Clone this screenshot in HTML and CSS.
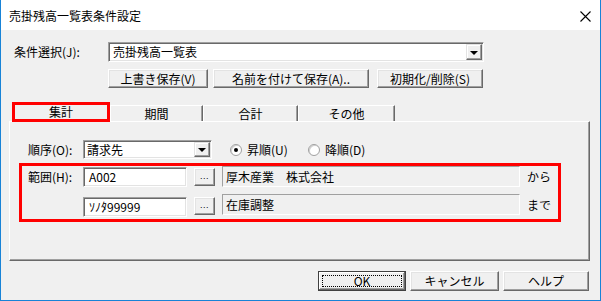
FILE: index.html
```html
<!DOCTYPE html>
<html lang="ja">
<head>
<meta charset="utf-8">
<title>売掛残高一覧表条件設定</title>
<link rel="stylesheet" href="styles.css">
</head>
<body>
<div class="window">
  <div class="titlebar">
    <span class="title">売掛残高一覧表条件設定</span>
    <svg class="close" width="11" height="11" viewBox="0 0 11 11"><path d="M0.5 0.5L10.5 10.5M10.5 0.5L0.5 10.5" stroke="#000" stroke-width="1.1" fill="none"/></svg>
  </div>
  <div class="client">
    <div class="cond-row">
      <span class="cond-label">条件選択(J):</span>
      <div class="combo cond-combo">
        <span class="combo-text">売掛残高一覧表</span>
        <span class="dd-btn"><span class="arrow"></span></span>
      </div>
    </div>
    <div class="action-row">
      <button class="btn btn-save">上書き保存(V)</button>
      <button class="btn btn-saveas">名前を付けて保存(A)..</button>
      <button class="btn btn-reset">初期化/削除(S)</button>
    </div>
    <div class="tabs">
      <div class="tab tab-active">集計</div>
      <div class="tab tab-2">期間</div>
      <div class="tab tab-3">合計</div>
      <div class="tab tab-4">その他</div>
    </div>
    <div class="panel">
      <div class="order-row">
        <span class="field-label">順序(O):</span>
        <div class="combo order-combo">
          <span class="combo-text order-text">請求先</span>
          <span class="dd-btn"><span class="arrow"></span></span>
        </div>
        <span class="radio radio-asc"><span class="radio-dot checked"></span>昇順(U)</span>
        <span class="radio radio-desc"><span class="radio-dot"></span>降順(D)</span>
      </div>
      <div class="range">
        <div class="range-row range-from">
          <span class="field-label">範囲(H):</span>
          <div class="edit">A002</div>
          <div class="btn btn-browse"><span class="dots">...</span></div>
          <div class="name-field">厚木産業　株式会社</div>
          <span class="range-suffix">から</span>
        </div>
        <div class="range-row range-to">
          <span class="field-label"></span>
          <div class="edit">ｿﾉﾀ99999</div>
          <div class="btn btn-browse"><span class="dots">...</span></div>
          <div class="name-field">在庫調整</div>
          <span class="range-suffix">まで</span>
        </div>
      </div>
    </div>
    <div class="footer">
      <button class="btn btn-ok"><span class="focus">OK</span></button>
      <button class="btn btn-cancel">キャンセル</button>
      <button class="btn btn-help">ヘルプ</button>
    </div>
  </div>
</div>
</body>
</html>
```

FILE: styles.css
```css
* { box-sizing: border-box; }

body {
  margin: 0;
  width: 601px;
  height: 301px;
  overflow: hidden;
  background: #ffffff;
  font-family: "Noto Sans CJK JP", "Noto Sans", sans-serif;
  font-size: 12px;
  line-height: 1;
  color: #000;
}

.window {
  width: 601px;
  height: 301px;
  border: 1px solid #1883d7;
  border-top: none;
  display: flex;
  flex-direction: column;
}

.titlebar {
  height: 30px;
  flex: none;
  background: #ffffff;
  display: flex;
  align-items: center;
  justify-content: space-between;
  padding: 2px 9px 0 8px;
}

.title { font-size: 12px; }

.close { display: block; }

.client {
  flex: 1;
  background: #f0f0f0;
  padding-top: 12px;
}

/* generic controls */
.btn {
  font-family: inherit;
  font-size: 12px;
  line-height: 1;
  color: #000;
  background: #f0f0f0;
  border: 1px solid;
  border-color: #ffffff #696969 #696969 #ffffff;
  box-shadow: inset -1px -1px 0 #a0a0a0, inset 1px 1px 0 #e3e3e3;
  padding: 0;
  margin: 0;
  display: flex;
  align-items: center;
  justify-content: center;
}

.combo {
  height: 20px;
  background: #ffffff;
  border: 1px solid;
  border-color: #a0a0a0 #ffffff #ffffff #a0a0a0;
  box-shadow: inset 1px 1px 0 #696969, inset -1px -1px 0 #e3e3e3;
  display: flex;
  align-items: stretch;
  padding: 1px;
}

.combo-text {
  flex: 1;
  display: flex;
  align-items: center;
  padding-left: 3px;
}

.dd-btn {
  width: 16px;
  flex: none;
  background: #f0f0f0;
  border: 1px solid;
  border-color: #e3e3e3 #696969 #696969 #e3e3e3;
  box-shadow: inset -1px -1px 0 #a0a0a0, inset 1px 1px 0 #ffffff;
  display: flex;
  align-items: center;
  justify-content: center;
}

.arrow {
  width: 0;
  height: 0;
  border-left: 4px solid transparent;
  border-right: 4px solid transparent;
  border-top: 4px solid #000;
  margin-top: 1px;
}

/* row 1 */
.cond-row {
  display: flex;
  align-items: center;
  height: 20px;
  padding-left: 13px;
}

.cond-label { width: 94px; }

.cond-combo { width: 376px; }

/* row 2 */
.action-row {
  display: flex;
  margin-top: 7px;
  padding-left: 107px;
  height: 19px;
}

.action-row .btn { height: 19px; }
.btn-save { width: 100px; }
.btn-saveas { width: 156px; margin-left: 5px; }
.btn-reset { width: 106px; margin-left: 8px; }

/* tabs */
.tabs {
  display: flex;
  align-items: flex-end;
  height: 19px;
  margin-top: 14px;
  padding-left: 11px;
}

.tab {
  height: 16px;
  display: flex;
  align-items: center;
  justify-content: center;
  border-top: 1px solid #ffffff;
  border-left: 1px solid #ffffff;
  border-right: 1px solid #696969;
  box-shadow: inset -1px 0 0 #a0a0a0;
  padding-top: 1px;
}

.tab-active {
  width: 98px;
  height: 20px;
  margin-bottom: -1px;
  border: 3px solid #ff0000;
  box-shadow: none;
  background: #f0f0f0;
  position: relative;
  z-index: 1;
  padding-top: 0;
}

.tab-2 { width: 93px; }
.tab-3 { width: 95px; }
.tab-4 { width: 97px; }

/* panel */
.panel {
  width: 581px;
  height: 140px;
  margin-left: 8px;
  border: 1px solid;
  border-color: #ffffff #696969 #696969 #ffffff;
  box-shadow: inset -1px -1px 0 #a0a0a0;
  padding-top: 18px;
}

.order-row {
  display: flex;
  align-items: center;
  height: 19px;
  padding-left: 18px;
}

.field-label { width: 55px; flex: none; }

.order-combo { width: 129px; height: 19px; }
.order-text { padding-left: 2px; }

.radio {
  display: flex;
  align-items: center;
}

.radio-asc { margin-left: 18px; width: 78px; }

.radio-dot {
  width: 12px;
  height: 12px;
  border-radius: 50%;
  background: #ffffff;
  border: 1px solid #a0a0a0;
  box-shadow: inset 1px 1px 0 #d0d0d0;
  margin-right: 5px;
  display: flex;
  align-items: center;
  justify-content: center;
  flex: none;
}

.radio-dot.checked::after {
  content: "";
  width: 4px;
  height: 4px;
  border-radius: 50%;
  background: #000;
}

/* range (annotated) */
.range {
  width: 542px;
  height: 59px;
  margin-top: 4px;
  margin-left: 9px;
  border: 3px solid #ff0000;
  padding-left: 6px;
}

.range-row {
  display: flex;
  align-items: flex-start;
}

.range-from { height: 28px; }
.range-to { height: 22px; }

.range-row .field-label {
  height: 21px;
  display: flex;
  align-items: center;
}

.edit {
  width: 104px;
  height: 20px;
  background: #ffffff;
  border: 1px solid;
  border-color: #a0a0a0 #ffffff #ffffff #a0a0a0;
  box-shadow: inset 1px 1px 0 #696969, inset -1px -1px 0 #e3e3e3;
  display: flex;
  align-items: center;
  padding-left: 5px;
  flex: none;
}

.btn-browse {
  width: 21px;
  height: 18px;
  margin-left: 7px;
  flex: none;
  align-items: flex-end;
  padding-bottom: 4px;
}

.dots {
  font-family: "Liberation Sans", sans-serif;
  font-size: 9px;
  line-height: 1;
  letter-spacing: 0.5px;
  color: #000;
}

.range-from .edit { margin-top: 1px; }
.range-from .btn-browse { margin-top: 2px; }
.range-to .edit { margin-top: 3px; }
.range-to .btn-browse { margin-top: 3px; }

.name-field {
  width: 298px;
  height: 21px;
  margin-left: 7px;
  border: 1px solid;
  border-color: #a0a0a0 #ffffff #ffffff #a0a0a0;
  display: flex;
  align-items: center;
  padding-left: 3px;
  flex: none;
}

.range-suffix {
  margin-left: 7px;
  height: 21px;
  display: flex;
  align-items: center;
}

/* footer */
.footer {
  display: flex;
  justify-content: flex-end;
  gap: 4px;
  margin-top: 10px;
  padding-right: 11px;
}

.footer .btn { height: 20px; }
.btn-ok {
  width: 88px;
  border: 1px solid #404040;
  box-shadow: inset -1px -1px 0 #696969, inset 1px 1px 0 #ffffff, inset -2px -2px 0 #a0a0a0;
  padding: 3px;
  align-items: stretch;
}
.focus {
  flex: 1;
  border: 1px dotted #000;
  display: flex;
  align-items: center;
  justify-content: center;
}
.btn-cancel { width: 89px; }
.btn-help { width: 86px; }
```
